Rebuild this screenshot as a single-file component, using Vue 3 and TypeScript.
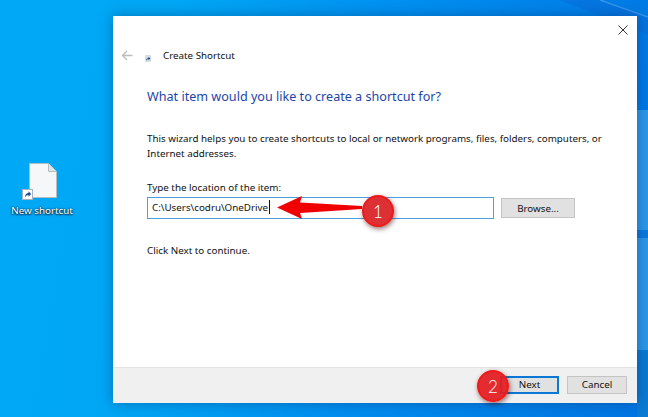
<script setup lang="ts">
const intro =
  'This wizard helps you to create shortcuts to local or network programs, files, folders, computers, or Internet addresses.'
</script>

<template>
  <div class="desktop">
    <svg class="wall" viewBox="0 0 648 417" preserveAspectRatio="none">
      <polygon points="600,0 648,17 648,34 560,0" fill="#0a6cd8" opacity="0.5" />
      <path d="M600 0 648 17" stroke="#3f9cf0" stroke-width="1.500" opacity="0.8" />
      <rect x="637" y="110" width="11" height="120" fill="#2b98e8" />
      <rect x="637" y="230" width="11" height="8" fill="#0a78dc" />
      <rect x="637" y="238" width="11" height="112" fill="#2b98e8" />
      <rect x="637" y="350" width="11" height="67" fill="#0a7ad2" />
    </svg>

    <div class="desk-icon">
      <svg width="44" height="40" viewBox="0 0 44 40">
        <path d="M9.500 2.500h19l8 8v26h-27z" fill="#f6f7f8" stroke="#b4bcc4" />
        <path d="M28.500 2.500v8h8" fill="#e2e4e6" stroke="#b4bcc4" />
        <rect x="2.500" y="28.500" width="10" height="10" fill="#fff" stroke="#a6b4c2" />
        <path d="M5 36.500c0-3 1.300-4.500 3.500-4.500V30.200l2.700 2.800-2.700 2.800V34c-1.500 0-2.600.8-3.500 2.500z" fill="#1c4f9c" />
      </svg>
      <span>New shortcut</span>
    </div>

    <section class="dialog">
      <header class="head">
        <svg class="back" width="12" height="11" viewBox="0 0 12 11">
          <path d="M11.500 5.500H1.500M6 1 1.500 5.500 6 10" fill="none" stroke="#bcbcbc" stroke-width="1.300" />
        </svg>
        <svg class="mini" width="6" height="7" viewBox="0 0 6 7">
          <rect width="6" height="7" fill="#d9dde2" />
          <path d="M1 6c0-2 1-3 2.500-3V1.800L5.500 3.500 3.500 5.200V4C2.300 4 1.600 4.800 1 6z" fill="#1c4f9c" />
        </svg>
        <span class="title">Create Shortcut</span>
        <svg class="close" width="10" height="10" viewBox="0 0 10 10">
          <path d="M.5.500l9 9M9.500.500l-9 9" stroke="#333" stroke-width="1" />
        </svg>
      </header>

      <div class="body">
        <h1>What item would you like to create a shortcut for?</h1>
        <p class="intro">{{ intro }}</p>
        <label class="field-label">Type the location of the item:</label>
        <div class="field-row">
          <div class="input">C:\Users\codru\OneDrive<i class="caret"></i></div>
          <button class="btn browse">Browse...</button>
        </div>
        <p class="hint">Click Next to continue.</p>
      </div>

      <footer class="foot">
        <button class="btn next">Next</button>
        <button class="btn">Cancel</button>
      </footer>
    </section>

    <svg class="arrow" width="86" height="24" viewBox="0 0 86 24">
      <path d="M0 11.500 25 0 23 6.500 85 10V13L23 17 25 23z" fill="#f00000" />
    </svg>
    <div class="badge one">1</div>
    <div class="badge two">2</div>
  </div>
</template>

<style>
html,
body {
  margin: 0;
  overflow: hidden;
}
</style>

<style scoped>
.desktop {
  position: relative;
  width: 648px;
  height: 417px;
  overflow: hidden;
  background: linear-gradient(100deg, #00a9f6 0%, #00a6f4 25%, #0090f0 55%, #0074e2 100%);
  font-family: "Noto Sans", "Open Sans", sans-serif;
  font-size: 9.800px;
  color: #111;
}

.wall {
  position: absolute;
  inset: 0;
  width: 100%;
  height: 100%;
}

.desk-icon {
  position: absolute;
  left: 20px;
  top: 161px;
  width: 44px;
  display: flex;
  flex-direction: column;
  align-items: center;
  color: #fff;
  font-size: 9.800px;
  text-shadow: 0 1px 2px #012, 0 0 2px #012;
  white-space: nowrap;
}

.desk-icon span {
  margin-top: 3px;
}

.dialog {
  position: absolute;
  left: 113px;
  top: 16px;
  width: 524px;
  height: 387px;
  background: #fff;
  box-shadow: 0 0 12px rgba(0, 40, 90, 0.4);
  display: flex;
  flex-direction: column;
}

.head {
  position: relative;
  display: flex;
  align-items: center;
  flex: none;
  height: 22px;
  margin-top: 28px;
  padding-left: 8px;
}

.mini {
  margin-left: 12px;
  margin-top: 6px;
}

.title {
  margin-left: 12px;
}

.close {
  position: absolute;
  right: 9px;
  top: -19px;
}

.body {
  flex: 1;
  padding: 21px 34px 0;
}

h1 {
  margin: 0;
  font-size: 12.600px;
  line-height: 20px;
  font-weight: 400;
  color: #1c45ac;
}

.intro {
  margin: 24px 0 0;
  width: 460px;
  line-height: 15px;
}

.field-label {
  display: block;
  margin-top: 19px;
  line-height: 15px;
}

.field-row {
  display: flex;
  align-items: center;
  gap: 7px;
  margin-top: 2px;
}

.input {
  box-sizing: border-box;
  width: 347px;
  height: 22px;
  border: 1px solid #4a9fe0;
  padding-left: 4px;
  line-height: 20px;
  white-space: nowrap;
}

.caret {
  display: inline-block;
  width: 1px;
  height: 14px;
  margin-left: 1px;
  background: #111;
  vertical-align: -3px;
}

.btn {
  box-sizing: border-box;
  width: 60px;
  height: 18px;
  padding: 0;
  border: 1px solid #c4c4c4;
  background: #e1e1e1;
  font: inherit;
  color: #111;
}

.browse {
  width: 74px;
  height: 20px;
}

.hint {
  margin: 24px 0 0;
  line-height: 15px;
}

.foot {
  flex: none;
  box-sizing: border-box;
  height: 36px;
  display: flex;
  justify-content: flex-end;
  align-items: center;
  gap: 8px;
  padding: 0 10px 2px 0;
  background: #f0f0f0;
  border-top: 1px solid #e4e4e4;
}

.next {
  width: 59px;
  border: 2px solid #0a78d4;
}

.arrow {
  position: absolute;
  left: 277px;
  top: 196px;
}

.badge {
  position: absolute;
  box-sizing: border-box;
  width: 32px;
  height: 32px;
  border-radius: 50%;
  display: flex;
  align-items: center;
  justify-content: center;
  background: #dc3034;
  border: 2px solid #f01818;
  box-shadow: 1px 2px 5px rgba(70, 0, 0, 0.55);
  color: #fff;
  font-family: "Lato", sans-serif;
  font-weight: 300;
  font-size: 17px;
}

.one {
  left: 362px;
  top: 195px;
}

.two {
  left: 477px;
  top: 370px;
  background: rgba(226, 30, 34, 0.94);
}
</style>
